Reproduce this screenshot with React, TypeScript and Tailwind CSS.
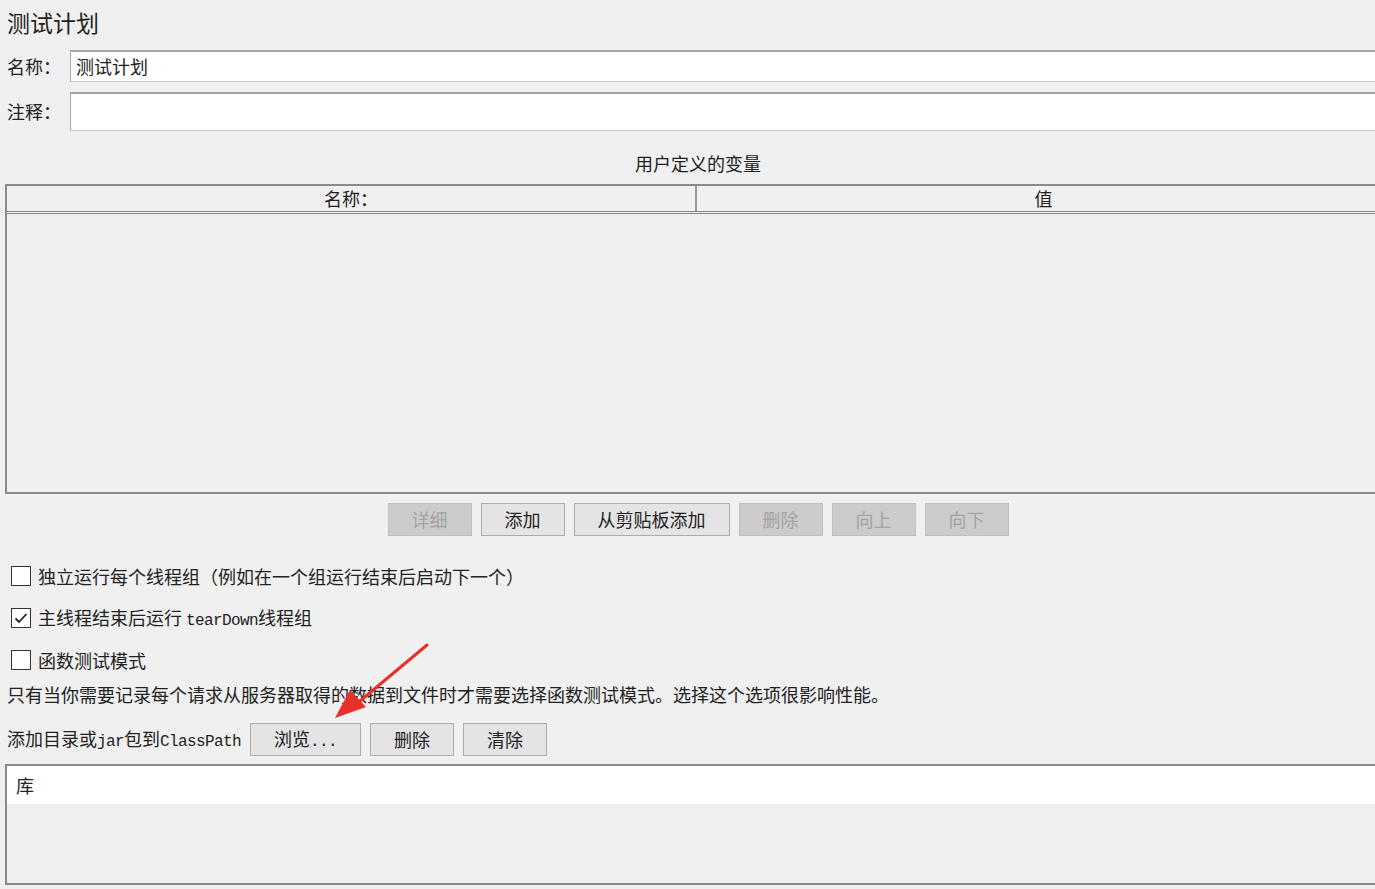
import React from "react";

const cjk = { fontFamily: '"Noto Sans CJK SC", "Liberation Sans", sans-serif' };
const mono = { fontFamily: '"Liberation Mono", "Noto Sans CJK SC", monospace' };

function Latin({ children }: { children: React.ReactNode }) {
  return (
    <span className="text-[16px] tracking-[-0.6px]" style={mono}>
      {children}
    </span>
  );
}

function Btn({
  children,
  disabled,
  w = "w-[84px]",
}: {
  children: React.ReactNode;
  disabled?: boolean;
  w?: string;
}) {
  return (
    <div
      className={
        "flex h-[33px] items-center justify-center border text-[18px] " +
        w +
        (disabled
          ? " border-[#bfbfbf] bg-[#cccccc] text-[#a3a3a3]"
          : " border-[#adadad] bg-[#e4e4e4] text-[#222]")
      }
    >
      <span>{children}</span>
    </div>
  );
}

function Check({ checked, children }: { checked?: boolean; children: React.ReactNode }) {
  return (
    <div className="flex h-[42px] items-center pl-[11px]">
      <div className="flex h-[20px] w-[20px] items-center justify-center border border-[#333] bg-white">
        {checked && (
          <svg width="14" height="12" viewBox="0 0 14 12">
            <path d="M1.5 6.5 L5 10 L12.5 2" fill="none" stroke="#222" strokeWidth="1.8" />
          </svg>
        )}
      </div>
      <span className="ml-[7px] text-[18px] text-[#222]">{children}</span>
    </div>
  );
}

export default function App() {
  return (
    <div className="relative h-[889px] w-full overflow-hidden bg-[#f0f0f0]" style={cjk}>
      <div className="flex w-[1392px] flex-col">
        <div className="h-[50px] pl-[7px] pt-[7px] text-[23px] leading-[30px] text-[#222]">测试计划</div>

        <div className="flex h-[32px] items-center">
          <div className="w-[70px] pl-[7px] text-[18px] text-[#222]">名称：</div>
          <div className="flex h-full flex-1 items-center border border-t-2 border-[#a6a6a6] border-b-[#c8c8c8] bg-white pl-[5px] text-[18px] text-[#222]">
            测试计划
          </div>
        </div>

        <div className="mt-[10px] flex h-[39px] items-center">
          <div className="w-[70px] pl-[7px] text-[18px] text-[#222]">注释：</div>
          <div className="h-full flex-1 border border-t-2 border-[#a6a6a6] border-b-[#c8c8c8] bg-white" />
        </div>

        <div className="flex h-[53px] justify-center pl-[4px] pt-[19px] text-[18px] leading-[26px] text-[#222]">
          用户定义的变量
        </div>

        <div className="ml-[5px] flex h-[310px] flex-col border-2 border-[#8a8a8a]">
          <div className="flex h-[28px] border-b-[3px] border-double border-[#8a8a8a] text-[18px] text-[#222]">
            <div className="flex w-[690px] items-center justify-center border-r-2 border-[#9a9a9a]">名称：</div>
            <div className="flex flex-1 items-center justify-center">值</div>
          </div>
          <div className="flex-1" />
        </div>

        <div className="mt-[9px] flex justify-center gap-[9px] pl-[4px]">
          <Btn disabled>详细</Btn>
          <Btn>添加</Btn>
          <Btn w="w-[156px]">从剪贴板添加</Btn>
          <Btn disabled>删除</Btn>
          <Btn disabled>向上</Btn>
          <Btn disabled>向下</Btn>
        </div>

        <div className="mt-[19px] flex flex-col">
          <Check>独立运行每个线程组（例如在一个组运行结束后启动下一个）</Check>
          <Check checked>
            主线程结束后运行 <Latin>tearDown</Latin>线程组
          </Check>
          <Check>函数测试模式</Check>
        </div>

        <div className="pl-[7px] text-[18px] leading-[26px] text-[#222]">
          只有当你需要记录每个请求从服务器取得的数据到文件时才需要选择函数测试模式。选择这个选项很影响性能。
        </div>

        <div className="mt-[16px] flex items-center gap-[9px]">
          <div className="pl-[7px] text-[18px] text-[#222]">
            添加目录或<Latin>jar</Latin>包到<Latin>ClassPath</Latin>
          </div>
          <Btn w="w-[111px]">
            浏览<Latin>...</Latin>
          </Btn>
          <Btn>删除</Btn>
          <Btn>清除</Btn>
        </div>

        <div className="ml-[5px] mt-[8px] flex h-[121px] flex-col border-2 border-[#8a8a8a]">
          <div className="flex h-[38px] items-center bg-white pl-[9px] text-[18px] text-[#222]">库</div>
          <div className="flex-1 bg-[#efefef]" />
        </div>
      </div>

      <svg className="pointer-events-none absolute left-0 top-0" width="1375" height="889">
        <path d="M427 645 L360 701" stroke="#e8302a" strokeWidth="3" strokeLinecap="round" />
        <polygon points="335,718 350,690 366,707" fill="#e8302a" />
      </svg>
    </div>
  );
}
